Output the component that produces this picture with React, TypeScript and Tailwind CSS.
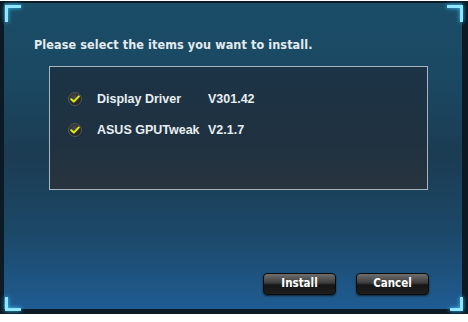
import React from "react";

function Check() {
  return (
    <div className="w-[14px] h-[14px] shrink-0 rounded-full bg-[radial-gradient(circle_at_45%_35%,#4a4a4a,#2c2c2c_55%,#1a1a1a)] border border-[#555] flex items-center justify-center">
      <svg width="10" height="8" viewBox="0 0 10 8">
        <path d="M1.2 4.2 L3.8 6.6 L8.8 1.4" fill="none" stroke="#dcec1a" strokeWidth="2" strokeLinecap="round" strokeLinejoin="round" />
      </svg>
    </div>
  );
}

export default function App() {
  const font = { fontFamily: '"DejaVu Sans Condensed", "Liberation Sans", sans-serif' };
  const itemFont = { fontFamily: '"Liberation Sans", Arial, sans-serif' };
  const btn =
    "w-[73px] h-[22px] rounded-[4px] border border-[#0a0a0a] bg-[linear-gradient(180deg,#6e6e6e_0%,#3c3c3c_45%,#161616_55%,#1e1e1e_100%)] text-[11.5px] font-bold text-white shadow-[0_1px_2px_rgba(0,0,0,0.6)]";
  return (
    <div className="w-[468px] h-[322px] bg-white pt-[1px]" style={font}>
      <div className="relative w-[468px] h-[313px] bg-[#0c1a26] pl-[4px] pr-[6px] pt-[2px] pb-[5px]">
        <div className="w-full h-full bg-[linear-gradient(180deg,#1a4d68_0%,#1b4862_25%,#1b3c52_50%,#1c4868_75%,#1f5c92_100%)] flex flex-col">
          <div className="pl-[30px] pt-[34px] text-[12.5px] font-bold text-[#e3ebf0] leading-[16px] tracking-[0.1px]">
            Please select the items you want to install.
          </div>
          <div className="ml-[45px] mt-[13px] w-[379px] h-[124px] border border-[#a7b5c0] bg-[linear-gradient(180deg,#1c3447_0%,#1f3140_60%,#28343f_100%)] pt-[25px] pl-[18px] flex flex-col gap-[17px]" style={itemFont}>
            <div className="flex items-center h-[14px]">
              <Check />
              <span className="ml-[15px] w-[111px] text-[12.5px] font-bold text-[#e8eef2]">Display Driver</span>
              <span className="text-[12.5px] font-bold text-[#e8eef2]">V301.42</span>
            </div>
            <div className="flex items-center h-[14px]">
              <Check />
              <span className="ml-[15px] w-[111px] text-[12.5px] font-bold text-[#e8eef2]">ASUS GPUTweak</span>
              <span className="text-[12.5px] font-bold text-[#e8eef2]">V2.1.7</span>
            </div>
          </div>
          <div className="flex justify-end gap-[20px] mt-[83px] pr-[33px]">
            <button className={btn}>Install</button>
            <button className={btn}>Cancel</button>
          </div>
        </div>
        <div className="absolute left-[5px] top-[4px] w-[16px] h-[17px] border-l-[3px] border-t-[3px] border-[#8fe8ff] drop-shadow-[0_0_2px_#3ec8ff]" />
        <div className="absolute right-[5px] top-[4px] w-[16px] h-[17px] border-r-[3px] border-t-[3px] border-[#8fe8ff] drop-shadow-[0_0_2px_#3ec8ff]" />
        <div className="absolute left-[5px] bottom-[3px] w-[16px] h-[14px] border-l-[3px] border-b-[3px] border-[#8fe8ff] drop-shadow-[0_0_2px_#3ec8ff]" />
        <div className="absolute right-[5px] bottom-[3px] w-[13px] h-[14px] border-r-[3px] border-b-[3px] border-[#8fe8ff] drop-shadow-[0_0_2px_#3ec8ff]" />
      </div>
    </div>
  );
}
